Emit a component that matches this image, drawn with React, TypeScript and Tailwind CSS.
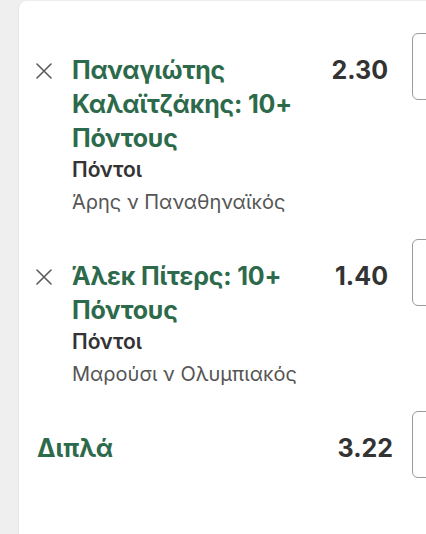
interface Selection {
    title: string;
    market: string;
    event: string;
    odds: string;
}

const selections: Selection[] = [
    {
        title: 'Παναγιώτης Καλαϊτζάκης: 10+ Πόντους',
        market: 'Πόντοι',
        event: 'Άρης ν Παναθηναϊκός',
        odds: '2.30',
    },
    {
        title: 'Άλεκ Πίτερς: 10+ Πόντους',
        market: 'Πόντοι',
        event: 'Μαρούσι ν Ολυμπιακός',
        odds: '1.40',
    },
];

function RemoveIcon() {
    return (
        <svg width="16" height="16" viewBox="0 0 16 16" className="shrink-0">
            <path d="M1 1 L15 15 M15 1 L1 15" stroke="#5c5c5c" strokeWidth="1.6" strokeLinecap="round" />
        </svg>
    );
}

function StakeBox() {
    return <div className="w-[40px] h-[67px] shrink-0 -mt-[20px] ml-[24px] border-[1.5px] border-[#9a9a9a] rounded-[6px]" />;
}

function SelectionRow({ sel }: { sel: Selection }) {
    return (
        <div className="flex items-start pl-[17px]">
            <div className="h-[34px] flex items-center shrink-0 pt-[1px]">
                <RemoveIcon />
            </div>
            <div className="ml-[20px] w-[246px] shrink-0">
                <div className="text-[25px] leading-[34px] font-bold text-[#2d6a4b] tracking-[-0.2px]">{sel.title}</div>
                <div className="text-[21px] leading-[27px] font-semibold text-[#333333] mt-[1px]">{sel.market}</div>
                <div className="text-[20px] leading-[31px] text-[#555555] mt-[4px]">{sel.event}</div>
            </div>
            <div className="flex-1 text-right text-[25px] leading-[34px] font-bold text-[#333333]">{sel.odds}</div>
            <StakeBox />
        </div>
    );
}

export default function App() {
    return (
        <div className="w-[426px] h-[534px] overflow-hidden bg-[#efefef] pt-px" style={{ fontFamily: 'Inter, "Noto Sans", sans-serif' }}>
            <div className="ml-[19px] w-[440px] h-[540px] bg-white rounded-tl-[8px] shadow-[-1px_0_2px_rgba(0,0,0,0.04)] pt-[52px]">
                <div className="flex flex-col gap-[41px] pr-[7px]">
                    {selections.map((s) => (
                        <SelectionRow key={s.odds} sel={s} />
                    ))}
                    <div className="flex items-start pl-[18px]">
                        <div className="flex-1 text-[25px] leading-[34px] font-bold text-[#2d6a4b]">Διπλά</div>
                        <div className="text-[25px] leading-[34px] font-bold text-[#333333] mr-[-5px]">3.22</div>
                        <StakeBox />
                    </div>
                </div>
            </div>
        </div>
    );
}
